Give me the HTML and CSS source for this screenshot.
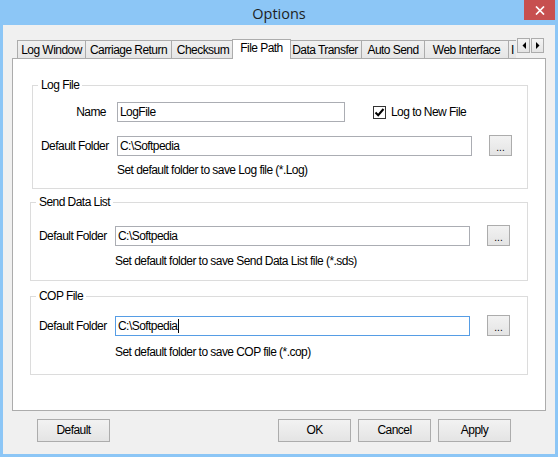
FILE: index.html
```html
<!DOCTYPE html>
<html lang="en">
<head>
<meta charset="utf-8">
<title>Options</title>
<link rel="stylesheet" href="styles.css">
</head>
<body>
<div class="window">
  <div class="titlebar">
    <span class="title">Options</span>
    <button class="close" aria-label="Close"><svg width="10" height="9" viewBox="0 0 10 9"><path d="M1 0.5L9 8.5M9 0.5L1 8.5" stroke="#fff" stroke-width="1.7"/></svg></button>
  </div>
  <div class="client">
    <div class="tabrow">
      <div class="tabs">
        <div class="tab t-log">Log Window</div>
        <div class="tab t-car">Carriage Return</div>
        <div class="tab t-chk">Checksum</div>
        <div class="tab active">File Path</div>
        <div class="tab t-dat">Data Transfer</div>
        <div class="tab t-aut">Auto Send</div>
        <div class="tab t-web">Web Interface</div>
        <div class="tab t-inf">I</div>
      </div>
      <div class="scroller">
        <span class="arrow"><svg width="4" height="7" viewBox="0 0 4 7"><path d="M4 0V7L0.5 3.5Z" fill="#000"/></svg></span>
        <span class="arrow"><svg width="4" height="7" viewBox="0 0 4 7"><path d="M0 0V7L3.5 3.5Z" fill="#000"/></svg></span>
      </div>
    </div>
    <div class="panel">
      <fieldset class="group g1">
        <legend>Log File</legend>
        <div class="row">
          <span class="lbl lbl-right">Name</span>
          <div class="textbox tb-name">LogFile</div>
          <label class="check"><span class="box"><svg width="11" height="11" viewBox="0 0 11 11"><path d="M1.5 5.5L4.2 8.2L9.5 2" fill="none" stroke="#000" stroke-width="2"/></svg></span>Log to New File</label>
        </div>
        <div class="row row2">
          <span class="lbl">Default Folder</span>
          <div class="textbox tb-folder">C:\Softpedia</div>
          <button class="btn browse">...</button>
        </div>
        <p class="hint">Set default folder to save Log file (*.Log)</p>
      </fieldset>
      <fieldset class="group g2">
        <legend>Send Data List</legend>
        <div class="row">
          <span class="lbl">Default Folder</span>
          <div class="textbox tb-folder">C:\Softpedia</div>
          <button class="btn browse">...</button>
        </div>
        <p class="hint">Set default folder to save Send Data List file (*.sds)</p>
      </fieldset>
      <fieldset class="group g3">
        <legend>COP File</legend>
        <div class="row">
          <span class="lbl">Default Folder</span>
          <div class="textbox tb-folder focused">C:\Softpedia<span class="caret"></span></div>
          <button class="btn browse">...</button>
        </div>
        <p class="hint">Set default folder to save COP file (*.cop)</p>
      </fieldset>
    </div>
    <div class="actions">
      <button class="btn action">Default</button>
      <div class="right-actions">
        <button class="btn action">OK</button>
        <button class="btn action">Cancel</button>
        <button class="btn action">Apply</button>
      </div>
    </div>
  </div>
</div>
</body>
</html>
```

FILE: styles.css
```css
* { box-sizing: border-box; }
html, body { margin: 0; padding: 0; background: #8cc6f6; }
body {
  font-family: "Liberation Sans", Arial, sans-serif;
  font-size: 12px;
  letter-spacing: -0.55px;
  color: #000;
}
.window {
  width: 558px;
  height: 457px;
  background: #8cc6f6;
  display: flex;
  flex-direction: column;
  overflow: hidden;
}
.titlebar {
  flex: none;
  height: 25px;
  position: relative;
  text-align: center;
}
.title {
  font-family: "Open Sans", "Noto Sans", sans-serif;
  font-size: 14.5px;
  letter-spacing: 0;
  line-height: 27px;
  color: #1e1e1e;
}
.close {
  position: absolute;
  top: 0;
  right: 3px;
  width: 31px;
  height: 20px;
  border: 0;
  padding: 0;
  background: #c75050;
  display: flex;
  align-items: center;
  justify-content: center;
}
.client {
  flex: none;
  margin: 0 3px 3px;
  height: 429px;
  background: #f0f0f0;
  padding-top: 14px;
}
.tabrow {
  display: flex;
  align-items: flex-start;
  margin-left: 9px;
  width: 534px;
  height: 20px;
  margin-bottom: -1px;
}
.tabs {
  flex: none;
  display: flex;
  align-items: flex-end;
  width: 504px;
  height: 20px;
  padding-left: 5px;
  overflow: hidden;
}
.tab {
  flex: none;
  height: 18px;
  margin-bottom: 1px;
  margin-right: -1px;
  border: 1px solid #acacac;
  border-bottom: 0;
  background: linear-gradient(#f0f0f0, #e6e6e6);
  text-align: center;
  line-height: 19px;
  white-space: nowrap;
  overflow: hidden;
}
.t-log { width: 69px; }
.t-car { width: 87px; }
.t-chk { width: 64px; }
.t-dat { width: 74px; }
.t-aut { width: 64px; }
.t-web { width: 85px; }
.t-inf { width: 30px; text-align: left; padding-left: 2px; }
.tab.active {
  position: relative;
  z-index: 2;
  width: 59px;
  height: 20px;
  margin-bottom: 0;
  margin-left: -2px;
  margin-right: -3px;
  background: #fff;
  line-height: 16px;
}
.scroller {
  display: flex;
  gap: 1px;
  margin-left: 1px;
  margin-top: -1px;
}
.arrow {
  width: 13px;
  height: 15px;
  border: 1px solid #acacac;
  background: linear-gradient(#f4f4f4, #e4e4e4);
  display: flex;
  align-items: center;
  justify-content: center;
}
.panel {
  width: 534px;
  height: 353px;
  margin-left: 9px;
  border: 1px solid #acacac;
  background: #fff;
}
.group {
  margin: 0;
  border: 1px solid #dcdcdc;
  min-width: 0;
  padding-left: 8px;
  padding-right: 0;
}
.group legend {
  padding: 0 3px;
  margin-left: -3px;
  line-height: 14px;
}
.g1 { margin: 19px 0 0 19px; width: 496px; padding-top: 10px; padding-bottom: 11px; }
.g2 { margin: 6px 0 0 17px; width: 498px; padding-top: 16px; padding-bottom: 12px; }
.g3 { margin: 8px 0 0 17px; width: 498px; padding-top: 12px; padding-bottom: 15px; }
.row {
  display: flex;
  align-items: center;
  height: 21px;
}
.g1 .row { height: 20px; }
.g1 .row2 { height: 21px; margin-top: 13px; }
.lbl {
  flex: none;
  width: 76px;
  line-height: 16px;
  white-space: nowrap;
}
.lbl-right { text-align: right; padding-right: 11px; }
.textbox {
  flex: none;
  height: 20px;
  border: 1px solid #abadb3;
  background: #fff;
  padding-left: 2px;
  line-height: 18px;
  white-space: nowrap;
}
.textbox.focused { border-color: #569de5; }
.tb-name { width: 228px; }
.tb-folder { width: 355px; }
.caret {
  display: inline-block;
  width: 1px;
  height: 14px;
  background: #000;
  vertical-align: -3px;
  margin-left: 1px;
}
.check {
  display: flex;
  align-items: center;
  margin-left: 28px;
  gap: 5px;
  white-space: nowrap;
}
.box {
  width: 13px;
  height: 13px;
  border: 1px solid #333;
  background: #fff;
  display: flex;
  align-items: center;
  justify-content: center;
}
.btn {
  font: inherit;
  letter-spacing: inherit;
  color: #000;
  border: 1px solid #acacac;
  background: linear-gradient(#f2f2f2, #e4e4e4);
  padding: 0;
}
.browse {
  flex: none;
  width: 23px;
  height: 21px;
  margin-left: 17px;
  font-size: 10px;
  letter-spacing: 0;
  line-height: 19px;
  padding-top: 2px;
}
.hint {
  margin: 7px 0 0 76px;
  line-height: 14px;
  white-space: nowrap;
}
.g2 .hint { margin-top: 8px; }
.g3 .hint { margin-top: 9px; }
.actions {
  display: flex;
  margin-top: 8px;
  padding: 0 44px 0 34px;
}
.right-actions {
  display: flex;
  gap: 7px;
  margin-left: auto;
}
.action {
  width: 73px;
  height: 23px;
  line-height: 21px;
}
```
